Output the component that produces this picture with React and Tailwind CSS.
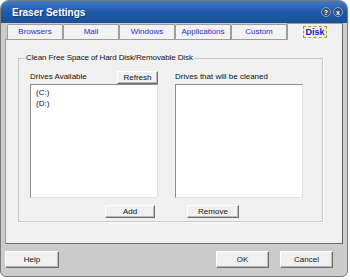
import React from 'react';

const btn = "flex items-center justify-center bg-[#f0f0f0] border border-t-[#ffffff] border-l-[#ffffff] border-b-[#6e6e6e] border-r-[#6e6e6e] shadow-[inset_-1px_-1px_0_#b8b8b8] text-[8px] text-[#111]";

function Tab({ label, active }) {
  if (active) {
    return (
      <div className="w-[56px] h-[17px] -mb-[1px] z-10 bg-[#f0f0f0] border border-b-0 border-[#9c9c9c] border-r-[#6e6e6e] flex items-center justify-center">
        <span className="px-[1px] border border-dashed border-[#a89a40] bg-[#f3f3c8] text-[9px] font-bold text-[#1010e0] leading-[10px]">{label}</span>
      </div>
    );
  }
  return (
    <div className="w-[56px] h-[15px] bg-[#f2f2f2] border border-b-0 border-[#9c9c9c] rounded-t-[2px] flex items-center justify-center text-[8px] text-[#2a2ad0]">
      {label}
    </div>
  );
}

export default function App() {
  const tabs = ['Browsers', 'Mail', 'Windows', 'Applications', 'Custom'];

  return (
    <div className="w-[350px] h-[280px] bg-white font-['Liberation_Sans',Arial,sans-serif]">
      <div className="w-[348px] h-[277px] flex flex-col rounded-t-[9px] rounded-b-[6px] overflow-hidden border border-[#7a7a7a] bg-[#cbcbcb]">
        {/* barra de titulo */}
        <div className="h-[22px] shrink-0 flex items-center pl-[11px] pr-[4px] bg-gradient-to-b from-[#3f78c4] via-[#1f5aa8] to-[#1b4f98]">
          <span className="text-white font-bold text-[10px] flex-1 [text-shadow:1px_1px_0_#163e78]">Eraser Settings</span>
          <div className="flex gap-[2px]">
            <div className="w-[10px] h-[10px] rounded-full bg-[#3a4f6e] border border-[#8aa2c4] flex items-center justify-center text-white text-[7px] font-bold leading-none">?</div>
            <div className="w-[10px] h-[10px] rounded-full bg-[#3a4f6e] border border-[#8aa2c4] flex items-center justify-center text-white text-[7px] font-bold leading-none">x</div>
          </div>
        </div>

        <div className="flex-1 flex flex-col px-[4px]">
          {/* pestañas */}
          <div className="flex items-end pl-[2px] h-[16px]">
            {tabs.map(t => <Tab key={t} label={t} />)}
            <Tab label="Disk" active />
          </div>

          {/* panel */}
          <div className="h-[205px] bg-[#f0f0f0] border border-[#9c9c9c] border-r-[#5e5e5e] border-b-[#6e6e6e] pt-[18px] pl-[12px]">
            <div className="relative w-[305px] h-[164px] border border-[#c8c8c8] shadow-[1px_1px_0_#ffffff]">
              <span className="absolute -top-[6px] left-[6px] bg-[#f0f0f0] px-[1px] text-[8px] leading-[10px] text-[#111] tracking-[-0.1px]">Clean Free Space of Hard Disk/Removable Disk</span>

              <div className="flex gap-[17px] pl-[11px] pt-[12px]">
                <div className="flex flex-col w-[128px]">
                  <div className="flex items-end justify-between h-[13px]">
                    <span className="text-[8px] text-[#111] leading-[10px] mb-[2px]">Drives Available</span>
                    <div className={btn + " w-[41px] h-[13px]"}>Refresh</div>
                  </div>
                  <div className="h-[114px] bg-white border border-[#8c8c8c] border-r-[#e0e0e0] border-b-[#e0e0e0] px-[5px] pt-[2px] text-[8px] leading-[11px] text-[#111]">
                    <div>(C:)</div>
                    <div>(D:)</div>
                  </div>
                  <div className={btn + " w-[50px] h-[13px] mt-[7px] self-end mr-[3px]"}>Add</div>
                </div>

                <div className="flex flex-col w-[128px]">
                  <div className="flex items-end h-[13px]">
                    <span className="text-[8px] text-[#111] leading-[10px] mb-[2px]">Drives that will be cleaned</span>
                  </div>
                  <div className="h-[114px] bg-white border border-[#8c8c8c] border-r-[#e0e0e0] border-b-[#e0e0e0]"></div>
                  <div className={btn + " w-[52px] h-[13px] mt-[7px] ml-[12px]"}>Remove</div>
                </div>
              </div>
            </div>
          </div>

          {/* botones inferiores */}
          <div className="flex items-center mt-[7px]">
            <div className={btn + " w-[54px] h-[17px]"}>Help</div>
            <div className="flex-1"></div>
            <div className={btn + " w-[53px] h-[17px]"}>OK</div>
            <div className={btn + " w-[53px] h-[17px] ml-[11px] mr-[10px]"}>Cancel</div>
          </div>
        </div>
      </div>
    </div>
  );
}
